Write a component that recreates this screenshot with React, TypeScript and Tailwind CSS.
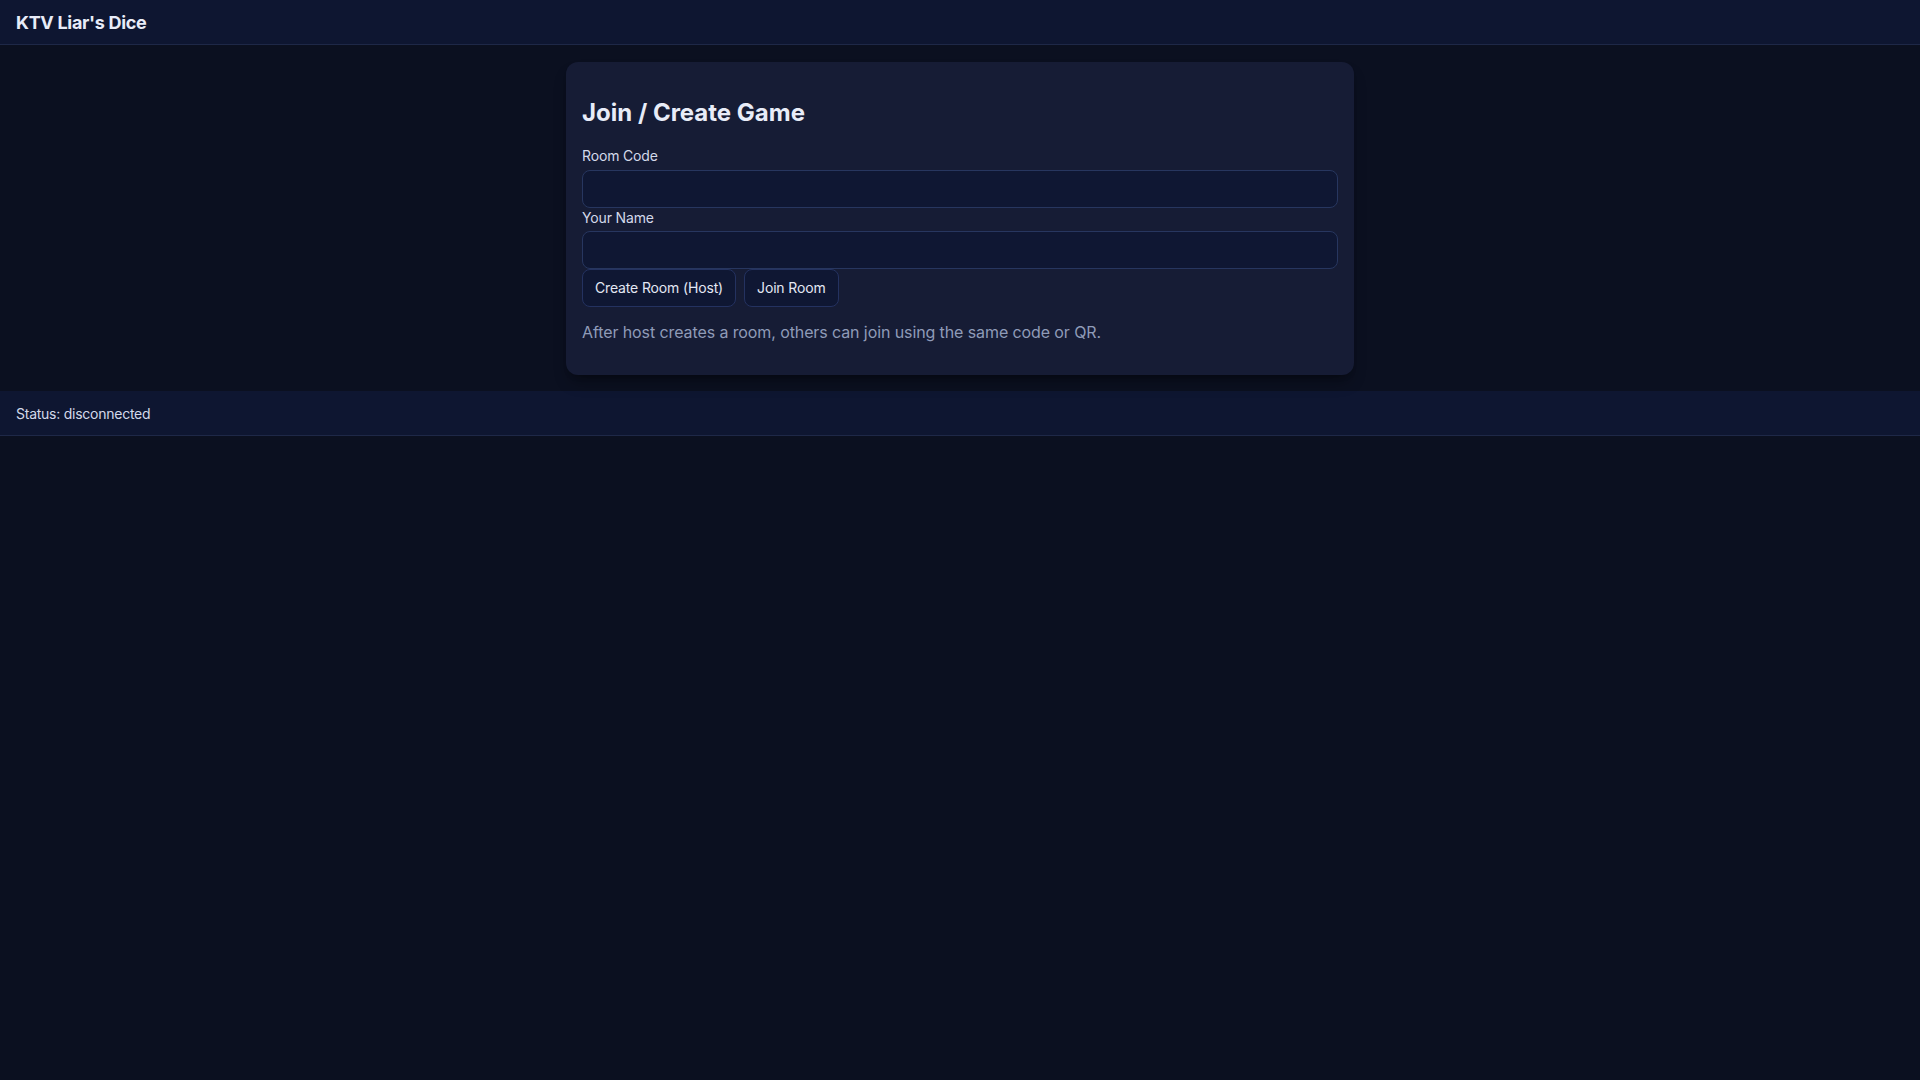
import React, { useState } from "react";

const App = () => {
    const [roomCode, setRoomCode] = useState("");
    const [playerName, setPlayerName] = useState("");
    const [status] = useState("disconnected");

    return (
        <div
            className="min-h-screen bg-[#0b1020] text-[#e5e9f5]"
            style={{ fontFamily: "Inter, 'Noto Sans', sans-serif" }}
        >
            {/* Header */}
            <header className="bg-[#0e1631] border-b border-[#1e2847] px-4 pt-[9px] pb-[7px]">
                <h1 className="text-lg leading-7 font-bold tracking-[-0.3px] text-[#e8ecf8]">KTV Liar's Dice</h1>
            </header>

            {/* Lobby */}
            <main className="flex justify-center pt-[17px]">
                <section className="w-[788px] bg-[#161c35] rounded-xl px-4 py-4 shadow-lg shadow-black/30">
                    <h2 className="mt-[19px] mb-[17px] text-2xl leading-8 font-bold text-[#e8ecf8]">
                        Join / Create Game
                    </h2>

                    <label className="block text-sm leading-5 mb-1 tracking-[-0.15px] text-[#d3d9ea]">Room Code</label>
                    <input
                        type="text"
                        value={roomCode}
                        onChange={(e) => setRoomCode(e.target.value)}
                        className="block w-full h-[38px] px-3 bg-[#0f1733] border border-[#27365f] rounded-lg text-sm text-[#e5e9f5] focus:outline-none"
                    />

                    <label className="block text-sm leading-5 mb-[3px] tracking-[-0.15px] text-[#d3d9ea]">Your Name</label>
                    <input
                        type="text"
                        value={playerName}
                        onChange={(e) => setPlayerName(e.target.value)}
                        className="block w-full h-[38px] px-3 bg-[#0f1733] border border-[#27365f] rounded-lg text-sm text-[#e5e9f5] focus:outline-none"
                    />

                    <div className="flex gap-2">
                        <button className="h-[38px] px-3 bg-[#0f1733] border border-[#243260] rounded-lg text-sm tracking-[-0.15px] text-[#e3e7f3] cursor-pointer">
                            Create Room (Host)
                        </button>
                        <button className="h-[38px] px-3 bg-[#0f1733] border border-[#243260] rounded-lg text-sm tracking-[-0.15px] text-[#e3e7f3] cursor-pointer">
                            Join Room
                        </button>
                    </div>

                    <p className="mt-4 mb-[17px] text-base leading-[1.2] tracking-[-0.1px] text-[#8f9bb8]">
                        After host creates a room, others can join using the same code or QR.
                    </p>
                </section>
            </main>

            {/* Status bar */}
            <footer className="mt-4 bg-[#0e1631] border-b border-[#1e2847] px-4 pt-[13px] pb-[11px]">
                <p className="text-sm leading-5 tracking-[-0.25px] text-[#d3d9ea]">Status: {status}</p>
            </footer>
        </div>
    );
};

export default App;
